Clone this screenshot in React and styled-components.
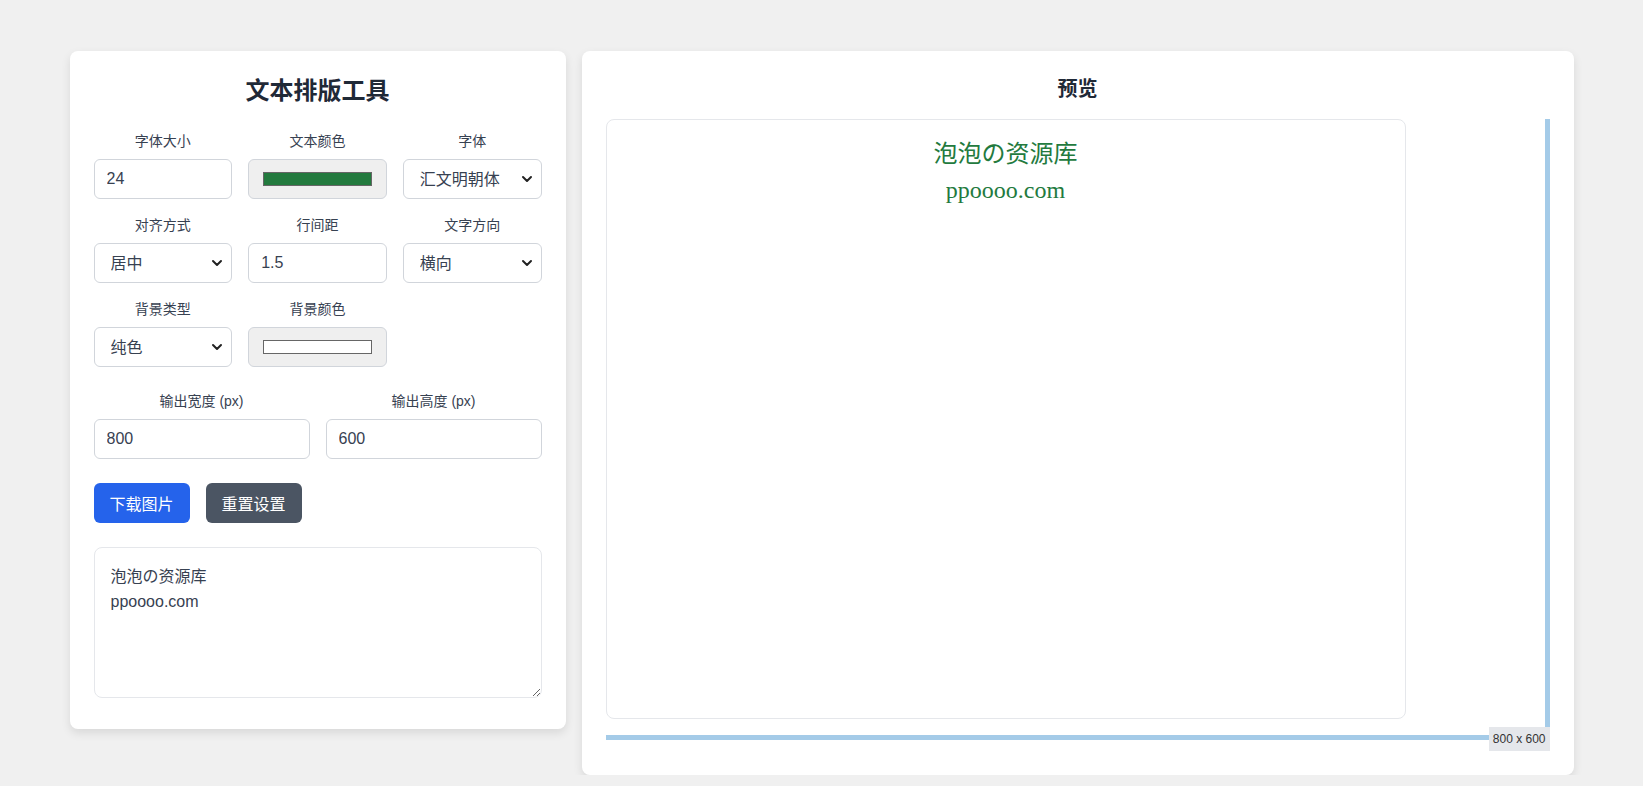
import React, { useState } from 'react'
import styled, { createGlobalStyle } from 'styled-components'

const GlobalStyle = createGlobalStyle`
  * {
    box-sizing: border-box;
  }

  body {
    margin: 0;
    background: #f0f0f0;
    font-family: 'Liberation Sans', 'Noto Sans CJK SC', sans-serif;
    color: #374151;
  }
`

//#region styles
const Page = styled.div`
  max-width: 1504px;
  margin: 51px auto 0;
  display: grid;
  grid-template-columns: 1fr 2fr;
  gap: 16px;
  align-items: start;
`

const Card = styled.section`
  background: #fff;
  border-radius: 8px;
  box-shadow: 0 4px 10px rgba(0, 0, 0, 0.1);
  padding: ${(p) => (p.$tight ? '24px 24px 31px' : '24px')};
`

const Title = styled.h1`
  margin: 0 0 24px;
  font-size: 24px;
  line-height: 32px;
  font-weight: 700;
  text-align: center;
  color: #1f2937;
`

const PreviewTitle = styled.h2`
  margin: 0 0 16px;
  font-size: 20px;
  line-height: 28px;
  font-weight: 700;
  text-align: center;
  color: #1f2937;
`

const Form = styled.div`
  display: flex;
  flex-direction: column;
  gap: 24px;
`

const Grid = styled.div`
  display: grid;
  grid-template-columns: repeat(${(p) => p.$cols}, 1fr);
  gap: 16px;
`

const Field = styled.div`
  display: flex;
  flex-direction: column;
  min-width: 0;
`

const Label = styled.label`
  font-size: 14px;
  line-height: 20px;
  margin-bottom: 8px;
  text-align: center;
  color: #374151;
`

const TextInput = styled.input`
  width: 100%;
  height: 40px;
  padding: 0 12px;
  border: 1px solid #d1d5db;
  border-radius: 6px;
  font-family: inherit;
  font-size: 16px;
  color: #374151;
  background: #fff;
  outline: none;
`

const ColorInput = styled.input`
  width: 100%;
  height: 40px;
  padding: 0;
  border: 1px solid #d1d5db;
  border-radius: 6px;
  background: #efefef;
  cursor: pointer;
  -webkit-appearance: none;
  appearance: none;

  &::-webkit-color-swatch-wrapper {
    padding: 12px 14px;
  }

  &::-webkit-color-swatch {
    border: 1px solid #666;
    border-radius: 0;
  }
`

const SelectWrap = styled.div`
  position: relative;

  svg {
    position: absolute;
    right: 9px;
    top: 50%;
    transform: translateY(-50%);
    pointer-events: none;
  }
`

const Select = styled.select`
  width: 100%;
  height: 40px;
  padding: 0 28px 0 16px;
  border: 1px solid #d1d5db;
  border-radius: 6px;
  font-family: inherit;
  font-size: 16px;
  color: #374151;
  background: #fff;
  -webkit-appearance: none;
  appearance: none;
  outline: none;
`

const Buttons = styled.div`
  display: flex;
  gap: 16px;
`

const Button = styled.button`
  width: 96px;
  height: 40px;
  border: none;
  border-radius: 6px;
  font-family: inherit;
  font-size: 16px;
  color: #fff;
  cursor: pointer;
  background: ${(p) => (p.$variant === 'primary' ? '#2563eb' : '#4b5563')};
`

const TextArea = styled.textarea`
  display: block;
  width: 100%;
  height: 151px;
  padding: 16px;
  border: 1px solid #e5e7eb;
  border-radius: 8px;
  font-family: inherit;
  font-size: 16px;
  line-height: 25px;
  color: #374151;
  resize: vertical;
  outline: none;
`

const Stage = styled.div`
  position: relative;
  height: 632px;
`

const Canvas = styled.div`
  width: 800px;
  height: 600px;
  border: 1px solid #e5e7eb;
  border-radius: 8px;
  padding-top: 16px;
  background: ${(p) => p.$bg};
  color: ${(p) => p.$color};
  font-family: 'Liberation Serif', 'Noto Sans CJK SC', serif;
  font-size: 24px;
  line-height: 36px;
  text-align: center;
  white-space: pre-line;
`

const RulerY = styled.div`
  position: absolute;
  top: 0;
  right: 0;
  width: 5px;
  height: 616px;
  background: #a4cbe8;
`

const RulerX = styled.div`
  position: absolute;
  left: 0;
  right: 0;
  top: 616px;
  height: 5px;
  background: #a4cbe8;
`

const SizeTag = styled.span`
  position: absolute;
  right: 0;
  bottom: 0;
  height: 24px;
  padding: 0 4px;
  display: flex;
  align-items: center;
  background: #e5e7eb;
  color: #333;
  font-size: 12px;
`
//#endregion

function Chevron() {
  return (
    <svg width="12" height="8" viewBox="0 0 12 8">
      <path
        d="M2 2l4 4 4-4"
        fill="none"
        stroke="#222"
        strokeWidth="2"
        strokeLinecap="round"
        strokeLinejoin="round"
      />
    </svg>
  )
}

function SelectField({ label, value, options }) {
  return (
    <Field>
      <Label>{label}</Label>
      <SelectWrap>
        <Select defaultValue={value}>
          {options.map((o) => (
            <option key={o}>{o}</option>
          ))}
        </Select>
        <Chevron />
      </SelectWrap>
    </Field>
  )
}

function App() {
  const [text, setText] = useState('泡泡の资源库\nppoooo.com')
  const [color, setColor] = useState('#237a3e')
  const [bg, setBg] = useState('#ffffff')

  return (
    <>
      <GlobalStyle />
      <Page>
        <Card $tight>
          <Title>文本排版工具</Title>
          <Form>
            <Grid $cols={3}>
              <Field>
                <Label>字体大小</Label>
                <TextInput type="number" defaultValue="24" />
              </Field>
              <Field>
                <Label>文本颜色</Label>
                <ColorInput
                  type="color"
                  value={color}
                  onChange={(e) => setColor(e.target.value)}
                />
              </Field>
              <SelectField
                label="字体"
                value="汇文明朝体"
                options={['汇文明朝体', '思源黑体', '宋体']}
              />
              <SelectField
                label="对齐方式"
                value="居中"
                options={['左对齐', '居中', '右对齐']}
              />
              <Field>
                <Label>行间距</Label>
                <TextInput type="number" defaultValue="1.5" />
              </Field>
              <SelectField
                label="文字方向"
                value="横向"
                options={['横向', '纵向']}
              />
              <SelectField
                label="背景类型"
                value="纯色"
                options={['纯色', '渐变', '图片']}
              />
              <Field>
                <Label>背景颜色</Label>
                <ColorInput
                  type="color"
                  value={bg}
                  onChange={(e) => setBg(e.target.value)}
                />
              </Field>
            </Grid>

            <Grid $cols={2}>
              <Field>
                <Label>输出宽度 (px)</Label>
                <TextInput type="number" defaultValue="800" />
              </Field>
              <Field>
                <Label>输出高度 (px)</Label>
                <TextInput type="number" defaultValue="600" />
              </Field>
            </Grid>

            <Buttons>
              <Button $variant="primary">下载图片</Button>
              <Button>重置设置</Button>
            </Buttons>

            <TextArea value={text} onChange={(e) => setText(e.target.value)} />
          </Form>
        </Card>

        <Card>
          <PreviewTitle>预览</PreviewTitle>
          <Stage>
            <Canvas $bg={bg} $color={color}>
              {text}
            </Canvas>
            <RulerY />
            <RulerX />
            <SizeTag>800 x 600</SizeTag>
          </Stage>
        </Card>
      </Page>
    </>
  )
}

export default App
